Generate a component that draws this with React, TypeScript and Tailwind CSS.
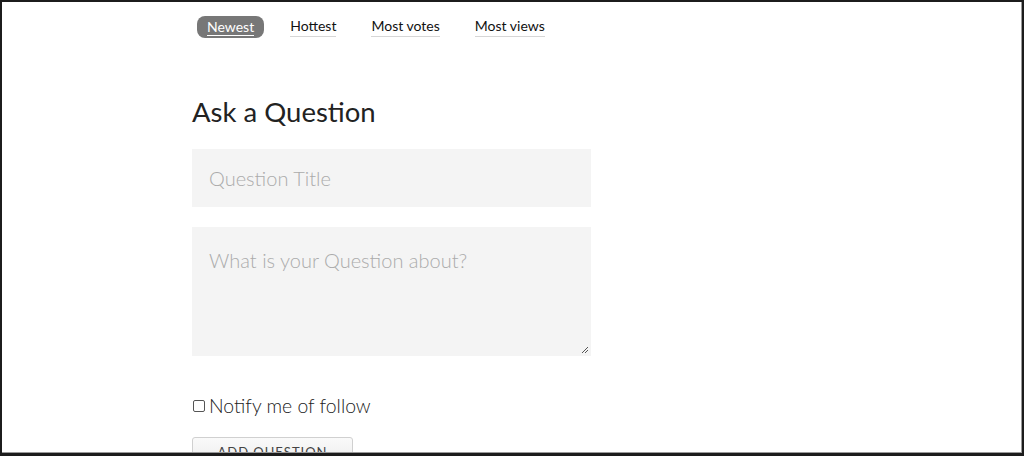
import React from "react";

export default function App() {
  const navItem = "text-[14px] text-[#111] border-b border-[#d6d6d6] leading-[18px] pb-[1px]";
  return (
    <div
      className="w-[1024px] h-[456px] overflow-hidden bg-white border-t-2 border-l-2 border-r-2 border-b-[3px] border-[#1c1c1c] box-border"
      style={{ fontFamily: "Lato, 'Open Sans', sans-serif" }}
    >
      <div className="w-full h-full border border-[#9a9a9a] border-t-0 border-l-0 pl-[190px] overflow-hidden">
        <nav className="flex items-center h-[22px] mt-[14px] ml-[5px]">
          <span className="bg-[#777] rounded-[8px] px-[10px] h-[22px] flex items-center">
            <span className="text-[14px] text-white border-b border-white leading-[16px]">Newest</span>
          </span>
          <span className={`${navItem} ml-[26px]`}>Hottest</span>
          <span className={`${navItem} ml-[35px]`}>Most votes</span>
          <span className={`${navItem} ml-[35px]`}>Most views</span>
        </nav>
        <h1 className="text-[27.5px] text-[#222] leading-[34px] mt-[57px]">Ask a Question</h1>
        <div className="mt-[20px] w-[399px] h-[58px] bg-[#f4f4f4] flex items-center pl-[17px]">
          <span className="text-[20px] font-light text-[#ababab]">Question Title</span>
        </div>
        <div className="relative mt-[20px] w-[399px] h-[129px] bg-[#f4f4f4] pl-[17px] pt-[21px]">
          <span className="text-[20px] font-light text-[#ababab] leading-[24px]">What is your Question about?</span>
          <svg className="absolute right-[2px] bottom-[2px]" width="8" height="8" viewBox="0 0 8 8">
            <line x1="1" y1="7" x2="7" y2="1" stroke="#555" strokeWidth="1" />
            <line x1="4" y1="7" x2="7" y2="4" stroke="#555" strokeWidth="1" />
          </svg>
        </div>
        <label className="flex items-center mt-[38px] h-[24px]">
          <span className="w-[12px] h-[12px] border border-[#555] rounded-[2px] bg-white ml-[1px] mr-[4px]" />
          <span className="text-[19.4px] font-light text-[#222] leading-[24px]">Notify me of follow</span>
        </label>
        <div className="mt-[19px] w-[161px] h-[30px] border border-[#d0d0d0] rounded-[3px] bg-gradient-to-b from-[#fafafa] to-[#ececec] flex justify-center pt-[6px]">
          <span className="text-[13px] tracking-[1px] text-[#444] leading-[16px]">ADD QUESTION</span>
        </div>
      </div>
    </div>
  );
}
